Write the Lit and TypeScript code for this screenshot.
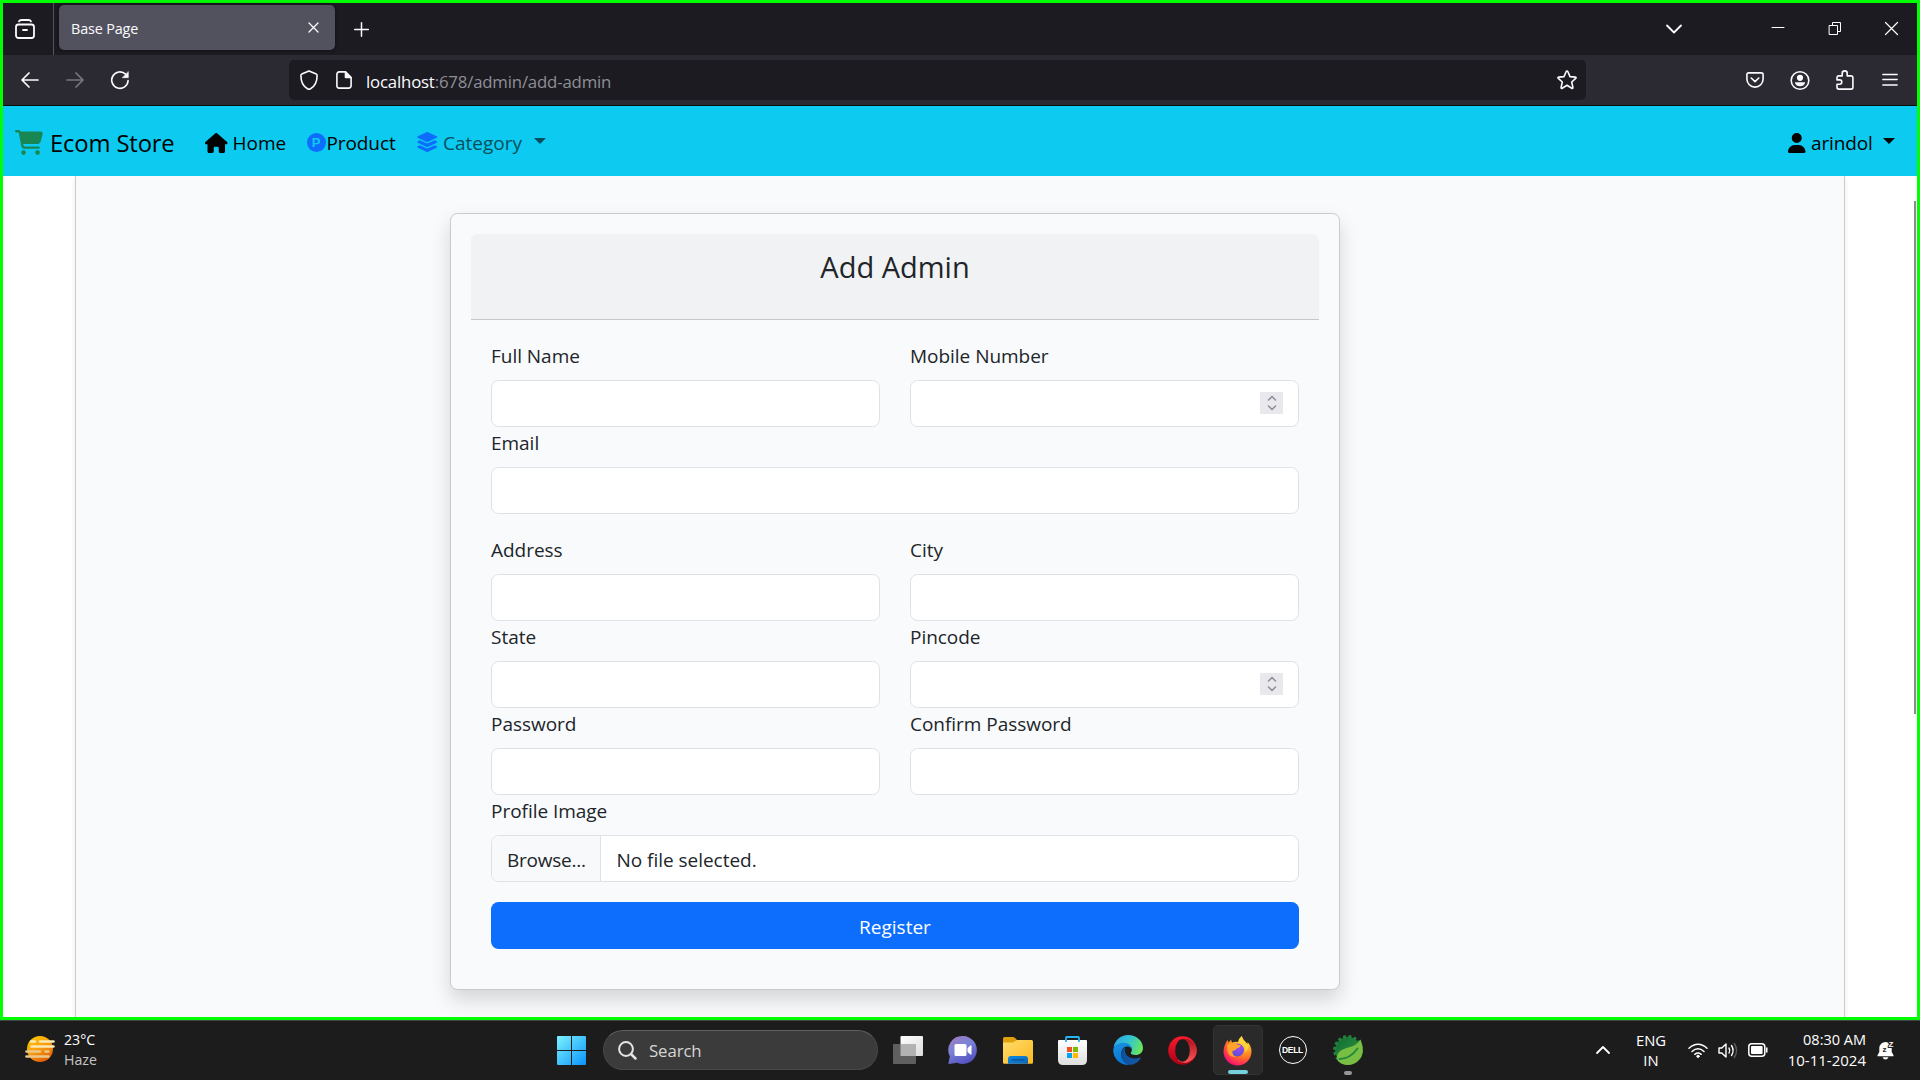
import { LitElement, html, svg, css, nothing } from "lit";
import { customElement, property } from "lit/decorators.js";

/* ---------- glyphs ---------- */

const line = (w: number, h: number, body: unknown, sw = 1.6, color = "#fbfbfe") => html`
  <svg width=${w} height=${h} viewBox="0 0 ${w} ${h}" fill="none" stroke=${color}
    stroke-width=${sw} stroke-linecap="round" stroke-linejoin="round">${body}</svg>`;

const solid = (w: number, h: number, vb: string, color: string, d: string) => html`
  <svg width=${w} height=${h} viewBox=${vb}><path fill=${color} d=${d}></path></svg>`;

const CART = "M0 24C0 10.7 10.7 0 24 0H69.5c22 0 41.5 12.8 50.6 32h411c26.3 0 45.5 25 38.6 50.4l-41 152.3c-8.5 31.4-37 53.3-69.5 53.3H170.7l5.4 28.5c2.2 11.3 12.1 19.5 23.6 19.5H488c13.3 0 24 10.7 24 24s-10.7 24-24 24H199.7c-34.6 0-64.3-24.6-70.7-58.5L77.4 54.5c-.7-3.8-4-6.5-7.9-6.5H24C10.7 48 0 37.3 0 24zM128 464a48 48 0 1 1 96 0 48 48 0 1 1 -96 0zm336-48a48 48 0 1 1 0 96 48 48 0 1 1 0-96z";
const HOUSE = "M575.8 255.5c0 18-15 32.1-32 32.1h-32l.7 160.2c0 2.7-.2 5.4-.5 8.1V472c0 22.1-17.9 40-40 40H456c-1.1 0-2.2 0-3.3-.1c-1.4 .1-2.8 .1-4.2 .1H416 392c-22.1 0-40-17.9-40-40V448 384c0-17.7-14.3-32-32-32H256c-17.7 0-32 14.3-32 32v64 24c0 22.1-17.9 40-40 40H160 128.1c-1.5 0-3-.1-4.5-.2c-1.2 .1-2.4 .2-3.6 .2H104c-22.1 0-40-17.9-40-40V360c0-.9 0-1.9 .1-2.8V287.6H32c-18 0-32-14-32-32.1c0-9 3-17 10-24L266.4 8c7-7 15-8 22-8s15 2 21 7L564.8 231.5c8 7 12 15 11 24z";
const LAYERS = "M264.5 5.2c14.9-6.9 32.1-6.9 47 0l218.6 101c8.5 3.9 13.9 12.4 13.9 21.8s-5.4 17.9-13.9 21.8l-218.6 101c-14.9 6.9-32.1 6.9-47 0L45.9 149.8C37.4 145.8 32 137.3 32 128s5.4-17.9 13.9-21.8L264.5 5.2zM476.9 209.6l53.2 24.6c8.5 3.9 13.9 12.4 13.9 21.8s-5.4 17.9-13.9 21.8l-218.6 101c-14.9 6.9-32.1 6.9-47 0L45.9 277.8C37.4 273.8 32 265.3 32 256s5.4-17.9 13.9-21.8l53.2-24.6 152 70.2c23.4 10.8 50.4 10.8 73.8 0l152-70.2zm-152 198.2l152-70.2 53.2 24.6c8.5 3.9 13.9 12.4 13.9 21.8s-5.4 17.9-13.9 21.8l-218.6 101c-14.9 6.9-32.1 6.9-47 0L45.9 405.8C37.4 401.8 32 393.3 32 384s5.4-17.9 13.9-21.8l53.2-24.6 152 70.2c23.4 10.8 50.4 10.8 73.8 0z";
const USER = "M224 256A128 128 0 1 0 224 0a128 128 0 1 0 0 256zm-45.7 48C79.8 304 0 383.8 0 482.3C0 498.7 13.3 512 29.7 512H418.3c16.4 0 29.7-13.3 29.7-29.7C448 383.8 368.2 304 269.7 304H178.3z";

const base = css`
  * { box-sizing: border-box; }
  svg { display: block; flex: none; overflow: visible; }
`;

/* ---------- browser window chrome ---------- */

@customElement("browser-chrome")
class BrowserChrome extends LitElement {
  static styles = [base, css`
    :host { display: block; flex: none; font-family: "Open Sans", sans-serif; color: #fbfbfe; }
    .tabs { display: flex; height: 52px; background: #1c1b22; }
    .cell { display: flex; align-items: center; justify-content: center; width: 45px; flex: none; }
    .side { width: 51px; border-right: 1px solid #55545c; padding-right: 6px; }
    .tab { display: flex; align-items: center; justify-content: space-between; width: 276px; height: 45px;
      margin: 2px 4px 0 5px; padding: 0 16px 0 12px; border-radius: 5px; background: #52525e;
      box-shadow: 0 0 4px rgba(0, 0, 0, .5); font-size: 14.4px; letter-spacing: -.15px; }
    .close-tab { padding-top: 0; }
    .label { padding-top: 2px; }
    .plus { padding-top: 1px; }
    .chev { margin-left: auto; margin-right: 53px; }
    .win { width: 57px; padding-bottom: 2px; }
    .win.edge { margin-right: -3px; }
    .bar { display: flex; height: 51px; background: #2b2a33; border-bottom: 1px solid #0c0c0d; padding: 0 5px 0 4.5px; }
    .url { display: flex; align-items: center; width: 1297px; height: 40px; margin: 5px auto 0 146.5px;
      padding: 0 9px 0 11px; border-radius: 5px; background: #1c1b22; font-size: 16.8px; letter-spacing: -.18px; }
    .doc { margin-left: 18px; margin-right: 14px; }
    .addr { padding-top: 3px; color: #8f8f97; white-space: nowrap; }
    .host { color: #fbfbfe; }
    .star { margin-left: auto; }
  `];

  render() {
    return html`
      <div class="tabs">
        <div class="cell side">${line(20, 20, svg`<rect x="1" y="5.5" width="18" height="13.5" rx="2.5"></rect><path d="M4 2.4Q4.6 1 6.5 1h7q1.9 0 2.5 1.4M8 11h4"></path>`, 1.8)}</div>
        <div class="tab"><span class="label">Base Page</span><span class="close-tab">${line(11, 11, svg`<path d="M1 1l9 9M10 1l-9 9"></path>`, 1.3)}</span></div>
        <div class="cell plus">${line(15, 15, svg`<path d="M7.5 .7v13.6M.7 7.5h13.6"></path>`, 1.5)}</div>
        <div class="cell chev">${line(16, 9, svg`<path d="M1 .5l7 7 7-7"></path>`, 1.8)}</div>
        <div class="cell win">${line(12, 1, svg`<path d="M0 -.5h12"></path>`, 1, "#fff")}</div>
        <div class="cell win">${line(12, 13, svg`<path d="M.5 3.5h8v9h-8zM3.5 3.5v-3h8v9h-3" stroke-linejoin="miter"></path>`, 1, "#fff")}</div>
        <div class="cell win edge">${line(13, 13, svg`<path d="M.5 .5l12 12M12.5 .5l-12 12"></path>`, 1.2, "#fff")}</div>
      </div>
      <div class="bar">
        <div class="cell">${line(18, 16, svg`<path d="M17 8H1.2M8 1L1 8l7 7"></path>`, 1.7)}</div>
        <div class="cell">${line(18, 16, svg`<path d="M1 8h15.8M10 1l7 7-7 7"></path>`, 1.7, "#78777f")}</div>
        <div class="cell">${line(18, 18, svg`<path d="M17.1 9.5A8.2 8.2 0 1 1 14.6 3.2"></path><path d="M17.3 .9v5.8h-5.8z" fill="#fbfbfe" stroke-width=".6"></path>`, 1.6)}</div>
        <div class="url">
          ${line(18, 20, svg`<path d="M9 .9l7.3 3.2q.8.4.8 1.3c0 5.600-1.700 10.500-6.600 13.300q-1.500.8-3 0C2.600 15.900.9 11 .9 5.400q0-.9.8-1.300z"></path>`, 1.6)}
          <span class="doc">${line(16, 18, svg`<path d="M3.200.9h6.300l5.600 5.600v8.300a2.300 2.300 0 0 1-2.300 2.300H3.200A2.300 2.300 0 0 1 .9 14.800V3.200A2.300 2.300 0 0 1 3.200.9z"></path><path d="M9.500 1v5.500H15z" fill="#fbfbfe"></path>`, 1.6)}</span>
          <span class="addr"><span class="host">localhost</span>:678/admin/add-admin</span>
          <span class="star">${line(20, 20, svg`<path d="M10 1q.6 0 .9.700l2.100 4.900 5.300.500q1.400.3.400 1.300l-4 3.600 1.200 5.400q.1 1.300-1.100.8L10 15.300l-4.800 2.900q-1.200.5-1.100-.8l1.200-5.400-4-3.600q-1-1 .4-1.300l5.300-.5 2.100-4.900q.3-.7.9-.7z"></path>`, 1.6)}</span>
        </div>
        <div class="cell">${line(18, 16, svg`<path d="M2.600.9h12.800a1.700 1.700 0 0 1 1.700 1.700v4.400a8.100 8.100 0 0 1-16.200 0V2.600A1.700 1.700 0 0 1 2.600.9zM5.200 6L9 9.600 12.800 6"></path>`, 1.6)}</div>
        <div class="cell">${line(20, 20, svg`<circle cx="10" cy="10.500" r="8.800"></circle><circle cx="10" cy="7.800" r="3.100" fill="#fbfbfe" stroke="none"></circle><path d="M4.800 12.300h10.400q-.8 3.900-5.200 3.900t-5.200-3.900z" fill="#fbfbfe" stroke="none"></path>`, 1.6)}</div>
        <div class="cell">${line(18, 20, svg`<path d="M2.600 5.900h3.600V3.400a2.500 2.500 0 0 1 5 0v2.500h3.900a1.800 1.800 0 0 1 1.800 1.800v9.600a1.800 1.800 0 0 1-1.800 1.800H2.800A1.800 1.800 0 0 1 1 17.300v-3h2.600a2.200 2.200 0 0 0 0-4.400H1V7.600a1.700 1.700 0 0 1 1.600-1.700z"></path>`, 1.6)}</div>
        <div class="cell">${line(16, 14, svg`<path d="M.8 1.500h14.400M.8 6.500h14.400M.8 12h14.400"></path>`, 1.3)}</div>
      </div>`;
  }
}

/* ---------- store navigation ---------- */

@customElement("store-nav")
class StoreNav extends LitElement {
  static styles = [base, css`
    :host { display: flex; flex: none; height: 70px; padding: 0 22px 0 12px; align-items: center; background: #0dcaf0;
      font-family: "Open Sans", sans-serif; font-size: 19px; color: #000; white-space: nowrap; }
    .item { display: flex; align-items: center; }
    .brand { width: 189.5px; font-size: 23.8px; gap: 7px; letter-spacing: -.15px; }
    .brand .t { padding-top: 3px; }
    .brand svg { margin-top: 3px; }
    .home { width: 102px; gap: 5.5px; }
    .home svg { margin-top: 3px; }
    .user svg { margin-top: 3px; }
    .product { width: 109px; }
    .product .t { letter-spacing: -.1px; }
    .category { color: #054f5d; }
    .category svg { margin-top: 2px; margin-right: 5px; }
    .t { padding-top: 3px; }
    .catname { width: 90.5px; }
    .p { display: flex; align-items: center; justify-content: center; width: 19px; height: 19px; margin: 2px 1px 0 0; border-radius: 50%;
      background: #0d6efd; color: #0dcaf0; font: bold 13px/19px "Liberation Sans", sans-serif; }
    .caret { border: 6px solid transparent; border-top-color: currentColor; border-bottom: 0; }
    .user { margin-left: auto; letter-spacing: -.15px; }
    .user .t { width: 72px; margin-left: 6px; }
  `];

  render() {
    return html`
      <div class="item brand">${solid(28, 25, "0 0 576 512", "#198754", CART)}<span class="t">Ecom Store</span></div>
      <div class="item home">${solid(22.5, 20, "0 0 576 512", "#000", HOUSE)}<span class="t">Home</span></div>
      <div class="item product"><span class="p">P</span><span class="t">Product</span></div>
      <div class="item category">${solid(22.5, 20, "0 0 576 512", "#0d6efd", LAYERS)}<span class="t catname">Category</span><span class="caret"></span></div>
      <div class="item user">${solid(17.5, 20, "0 0 448 512", "#000", USER)}<span class="t">arindol</span><span class="caret"></span></div>`;
  }
}

/* ---------- form ---------- */

@customElement("form-field")
class FormField extends LitElement {
  @property() label = "";
  @property() kind = "text";

  static styles = [base, css`
    :host { display: block; font-family: "Open Sans", sans-serif; font-size: 19px; letter-spacing: -.03px; color: #212529; }
    .label { display: block; height: 30px; line-height: 30px; padding-top: 1px; margin-bottom: 10px; }
    .control { display: flex; align-items: center; height: 47px; border: 1px solid #dee2e6; border-radius: 7.5px;
      background: #fff; overflow: hidden; }
    .input { flex: 1; min-width: 0; height: 100%; border: 0; outline: 0; background: none; padding: 0 15px; font: inherit; color: inherit; }
    .spin { display: flex; align-items: center; justify-content: center; width: 23px; height: 22px; margin: 0 15px 1px 0; background: #e9e9ed; }
    .browse { width: 109px; height: 100%; padding-left: 15px; padding-top: 2px; line-height: 45px; background: #f8f9fa; border-right: 1px solid #dee2e6;
      letter-spacing: -.25px; }
    .file { padding: 2px 0 0 15.5px; }
  `];

  render() {
    return html`
      <label class="label">${this.label}</label>
      <div class="control">
        ${this.kind === "file"
          ? html`<span class="browse">Browse...</span><span class="file">No file selected.</span>`
          : html`<input class="input" type=${this.kind === "password" ? "password" : "text"}>`}
        ${this.kind === "number"
          ? html`<span class="spin">${line(10, 16, svg`<path d="M1.500 5L5 1.500 8.500 5M1.500 11L5 14.500 8.500 11"></path>`, 1.6, "#8f8f9d")}</span>`
          : nothing}
      </div>`;
  }
}

@customElement("admin-page")
class AdminPage extends LitElement {
  static styles = [base, css`
    :host { display: flex; flex: 1; min-height: 0; overflow: hidden; background: #fff; font-family: "Open Sans", sans-serif; color: #212529; }
    .panel { width: 1770px; height: 900px; margin-left: 72px; padding: 37px 0 0 374px; flex: none;
      border: 1px solid #c8cacd; border-width: 0 1px; background: #f8fafc; box-shadow: 0 2px 5px rgba(0, 0, 0, .075); }
    .card { width: 890px; height: 777px; padding: 20px; border: 1px solid #c8cbce; border-radius: 7.5px; background: #f8fafc;
      box-shadow: 0 10px 20px rgba(0, 0, 0, .15); }
    .head { height: 86px; padding-top: 12px; border-bottom: 1px solid #c6c8ca; border-radius: 6px 6px 0 0; background: #f0f2f4;
      text-align: center; font-size: 29px; line-height: 42px; }
    .body { display: grid; grid-template-columns: 389px 389px; column-gap: 30px; padding: 20px; }
    .wide { grid-column: 1 / 3; }
    .gap { margin-bottom: 20px; }
    .btn { grid-column: 1 / 3; height: 47px; border: 0; border-radius: 7.5px; padding: 3px 0 0; background: #0d6efd; color: #fff; font: inherit; font-size: 19px; }
    .thumb { width: 2px; height: 513px; margin: 25px 1px 0 auto; background: #8a8a8d; }
  `];

  render() {
    return html`
      <div class="panel">
        <div class="card">
          <div class="head">Add Admin</div>
          <div class="body">
            <form-field label="Full Name"></form-field>
            <form-field label="Mobile Number" kind="number"></form-field>
            <form-field class="wide gap" label="Email"></form-field>
            <form-field label="Address"></form-field>
            <form-field label="City"></form-field>
            <form-field label="State"></form-field>
            <form-field label="Pincode" kind="number"></form-field>
            <form-field label="Password" kind="password"></form-field>
            <form-field label="Confirm Password" kind="password"></form-field>
            <form-field class="wide gap" label="Profile Image" kind="file"></form-field>
            <button class="btn">Register</button>
          </div>
        </div>
      </div>
      <div class="thumb"></div>`;
  }
}

/* ---------- taskbar ---------- */

const art = (w: number, h: number, body: unknown) => html`<svg width=${w} height=${h} viewBox="0 0 ${w} ${h}">${body}</svg>`;

const haze = art(30, 26, svg`
  <defs><linearGradient id="hz" x1="0.200" y1="0" x2="0.800" y2="1"><stop offset="0" stop-color="#ffc803"></stop><stop offset=".5" stop-color="#f79a0c"></stop><stop offset="1" stop-color="#dd5207"></stop></linearGradient></defs>
  <circle cx="15" cy="13" r="13" fill="url(#hz)"></circle>
  <g stroke-width="2.600" stroke-linecap="round"><path d="M6 5.500h4M15 5.500h13.500M6.500 10.500h22" stroke="#fbe9b4"></path><path d="M1.500 15.500h13.500M20.500 15.500h3M1.500 20.500h22" stroke="#e9c88a"></path></g>`);

const windows = art(29, 29, svg`
  <defs><linearGradient id="wn" gradientUnits="userSpaceOnUse" x1="0" y1="0" x2="29" y2="29"><stop offset="0" stop-color="#7cf3ff"></stop><stop offset="1" stop-color="#0a93fb"></stop></linearGradient></defs>
  <path fill="url(#wn)" d="M1 0h13v14H0V1q0-1 1-1zM15 0h13q1 0 1 1v13H15zM0 15h14v14H1q-1 0-1-1zM15 15h14v13q0 1-1 1H15z"></path>`);

const search = html`<svg width="19" height="19" viewBox="0 0 19 19" fill="none" stroke="#e4e4e4"><circle cx="8" cy="8" r="6.900" stroke-width="2"></circle><path d="M13 13l4.500 4.500" stroke-width="2.500" stroke-linecap="round"></path></svg>`;

const taskView = art(30, 28, svg`
  <defs><linearGradient id="tv" x1="0" y1="0" x2="1" y2="1"><stop offset="0" stop-color="#fff"></stop><stop offset="1" stop-color="#dcdcdc"></stop></linearGradient></defs>
  <rect x="7.500" width="22.500" height="20" rx="1" fill="url(#tv)"></rect><rect y="8" width="23" height="20" rx="1" fill="#5f5f5f"></rect><path d="M7.500 8H23v12H7.500z" fill="#b2b2b2"></path>`);

const chat = art(29, 28, svg`
  <defs><linearGradient id="ch" x1=".1" y1="0" x2=".6" y2="1"><stop offset="0" stop-color="#a07bbd"></stop><stop offset=".45" stop-color="#7b83d8"></stop><stop offset="1" stop-color="#5351c0"></stop></linearGradient></defs>
  <path fill="url(#ch)" d="M15 0a14 14 0 1 1-6 26.700L1.200 28q-1 0-.8-1l1.500-6.500A14 14 0 0 1 15 0z"></path>
  <rect x="6.500" y="8" width="12" height="12" rx="1.500" fill="#fff"></rect><path d="M19.500 12l3-2.500q1-.5 1 .5v8q0 1-1 .5l-3-2.500z" fill="#fff"></path>`);

const folder = art(30, 27, svg`
  <defs><linearGradient id="fd" x1="0" y1="0" x2="1" y2="1"><stop offset="0" stop-color="#ffdc6e"></stop><stop offset="1" stop-color="#fcb91e"></stop></linearGradient>
  <linearGradient id="fb" x1="0" y1="0" x2="1" y2="1"><stop offset="0" stop-color="#0a8ce4"></stop><stop offset="1" stop-color="#0f62b4"></stop></linearGradient></defs>
  <path fill="#dfa00a" d="M1.500 0h8.500q1 0 1.800.8L14 3H29v6H0V1.500Q0 0 1.500 0z"></path>
  <path fill="url(#fd)" d="M0 5.500h10L14 3h14.500Q30 3 30 4.500V25.500q0 1.300-1.300 1.300H1.300Q0 26.800 0 25.500z"></path>
  <path fill="url(#fb)" d="M5 26.800V22q0-3 3-3h14q3 0 3 3v4.800z"></path><path stroke="#0a4f94" stroke-width="1.200" d="M8.500 22.800h13"></path>`);

const store = art(29, 29, svg`
  <defs><linearGradient id="st" x1="0" y1="0" x2="0" y2="1"><stop offset="0" stop-color="#fff"></stop><stop offset="1" stop-color="#dedede"></stop></linearGradient></defs>
  <path fill="none" stroke="#25b5f1" stroke-width="1.800" d="M8 6V1.800Q8 1 8.800 1h11.400q.8 0 .8.800V6"></path>
  <path fill="url(#st)" d="M1 4h27q1 0 1 1v19q0 5-5 5H5q-5 0-5-5V5q0-1 1-1z"></path>
  <path fill="none" stroke="#25b5f1" stroke-width="1.800" d="M8 4v2M21 4v2"></path>
  <path fill="#f25022" d="M9 11h5v5H9z"></path><path fill="#7fba00" d="M15 11h5v5h-5z"></path><path fill="#00a4ef" d="M9 17h5v5H9z"></path><path fill="#ffb900" d="M15 17h5v5h-5z"></path>`);

const edge = art(30, 30, svg`
  <defs>
    <linearGradient id="e1" x1="0" y1=".3" x2="1" y2=".6"><stop offset="0" stop-color="#2ea7e6"></stop><stop offset=".5" stop-color="#33c6cf"></stop><stop offset="1" stop-color="#6be658"></stop></linearGradient>
    <linearGradient id="e2" x1="0" y1="0" x2=".4" y2="1"><stop offset="0" stop-color="#1a95e0"></stop><stop offset="1" stop-color="#0873d3"></stop></linearGradient>
    <linearGradient id="e3" x1="0" y1="0" x2="1" y2="1"><stop offset="0" stop-color="#0c4f9a"></stop><stop offset="1" stop-color="#1559a8"></stop></linearGradient>
  </defs>
  <path fill="url(#e1)" d="M.6 12.500C1.800 5.200 7.700 0 15 0c8.500 0 15 6 15 13 0 4.500-3.500 7-7.300 7-3 0-5-1-5-2 0-.7 1.200-1.300 1.200-3.300C18.900 11 15 8.600 11 8.600c-4.500 0-8 1.200-10.400 3.900z"></path>
  <path fill="url(#e2)" d="M.2 14.500C1.500 10 6 7.800 10.500 7.800c5 0 8.400 3 8.400 6.700-1-2-2.500-3-4.700-3-3.500 0-6 3.500-6 7.500 0 5 3.500 9.800 8.800 11C8 31 0 24 .2 14.500z"></path>
  <path fill="url(#e3)" d="M12.700 12.200C10 13.500 8.200 16 8.200 19c0 5.500 4 11 9.500 10.800 4-.4 8-3 10-6.600.2-.5-.2-.9-.8-.6-1.400.7-3 1-4.600 1-6 0-10-3.500-10.300-7.500-.1-1.500.1-2.800.7-3.900z"></path>`);

const opera = art(29, 29, svg`
  <defs><linearGradient id="op" x1="0" y1="0" x2="0" y2="1"><stop offset="0" stop-color="#ff1b2d"></stop><stop offset="1" stop-color="#a70014"></stop></linearGradient>
  <linearGradient id="oq" x1="0" y1="0" x2="0" y2="1"><stop offset="0" stop-color="#a8101c"></stop><stop offset="1" stop-color="#ff5a5a"></stop></linearGradient></defs>
  <circle cx="14.500" cy="14.500" r="14.300" fill="url(#op)"></circle>
  <path fill="url(#oq)" d="M10 4.500q4-2.500 9-1.500c6 2 9.800 6.500 9.800 11.500s-3.800 10-9.800 12q-5 1-9-2z"></path>
  <ellipse cx="14.500" cy="14.500" rx="7.300" ry="11.200" fill="#1c1c1c"></ellipse>`);

const firefox = art(29, 29, svg`
  <defs><radialGradient id="ff" cx=".75" cy=".1" r="1"><stop offset="0" stop-color="#fff44f"></stop><stop offset=".3" stop-color="#ffbd2e"></stop><stop offset=".6" stop-color="#ff7a22"></stop><stop offset=".82" stop-color="#ff3750"></stop><stop offset="1" stop-color="#eb0878"></stop></radialGradient>
  <radialGradient id="fp" cx=".6" cy=".3" r=".8"><stop offset="0" stop-color="#a247f5"></stop><stop offset="1" stop-color="#4f52cf"></stop></radialGradient></defs>
  <path fill="url(#ff)" d="M2.500 7.500L4.300 4l1.500 2.400L8 3.500l1 3q3-1.300 6-.5.500-3.500 3.700-6 .5 3.500 3.800 6 .8 1 1.500 2.500.8-1 .5-2.500 4 4 4 9.500a14 14 0 0 1-28 0q0-4.500 2-8z"></path>
  <circle cx="14.500" cy="14" r="6.500" fill="url(#fp)"></circle>
  <path fill="#ffa32b" d="M4 9q5-3.500 10.500-.5 2.500.2 3.500 1.300-1.300 2.400-4 2.400-1 2.300-4.500 2.800-.8 4 3.500 6Q6 21 4.500 15.500z"></path>
  <path fill="#ffd23a" d="M18.700 0q-2 4 1.300 7 3.500 4 1.500 9.500 6-4.500 2.500-9Q20 4.500 18.700 0z"></path>`);

const spring = art(30, 30, svg`
  <defs><linearGradient id="sp" x1="0" y1="0" x2="1" y2="1"><stop offset="0" stop-color="#116b35"></stop><stop offset="1" stop-color="#2f9a3e"></stop></linearGradient></defs>
  <circle cx="15" cy="15" r="13" fill="url(#sp)"></circle>
  <circle cx="15" cy="15" r="13.400" fill="none" stroke="#23823b" stroke-width="3" stroke-dasharray="3 2.260"></circle>
  <path fill="#78be43" d="M27.500 4.500C31 13 31 21 25 26c-5 5-15 5.500-20 0-2-4-1-8 3-10.500C14 11.500 22 13 27.500 4.500z"></path>
  <path fill="none" stroke="#1d8a3c" stroke-width="1.800" stroke-linecap="round" d="M6.500 24Q17 24 24.500 13.500"></path>`);

@customElement("task-bar")
class TaskBar extends LitElement {
  static styles = [base, css`
    :host { display: flex; flex: none; height: 60px; padding-bottom: 1px; align-items: center; border-top: 1px solid #434345; background: #1c1c1c;
      font-family: "Open Sans", sans-serif; font-size: 14.200px; line-height: 20px; color: #fff; white-space: nowrap; }
    .weather { display: flex; align-items: center; width: 544px; padding-left: 25px; gap: 9px; }
    .weather svg { margin-top: -3px; }
    .dim { color: #c4c4c4; }
    .app { position: relative; display: flex; align-items: center; justify-content: center; width: 55px; height: 50px; flex: none; }
    .active { width: 50px; margin: 0 2.500px; border-radius: 5px; background: #2a2a2a; border: 1px solid #333; }
    .active::after, .open::after { content: ""; position: absolute; bottom: 0; width: 20px; height: 4px; border-radius: 2px; background: #74d0da; }
    .open::after { width: 8px; background: #969696; }
    .search { display: flex; align-items: center; width: 275px; height: 40px; padding-left: 14px; margin: 0 2.500px 0 3.500px; gap: 12.500px;
      border-radius: 20px; border: 1px solid #484848; border-top-color: #606060; background: #3b3b3b; color: #d6d6d6; font-size: 16.800px; letter-spacing: -.1px; }
    .query { padding-top: 2px; }
    .dell { display: flex; align-items: center; justify-content: center; width: 28px; height: 28px; border: 1.500px solid #fff; border-radius: 50%;
      font: bold 8.500px/1 "Liberation Sans", sans-serif; letter-spacing: -.3px; }
    .tray { display: flex; align-items: center; margin-left: auto; padding-right: 23px; }
    .lang { width: 60px; margin: 0 7px 0 11.500px; text-align: center; font-size: 14.800px; }
    .icons { display: flex; align-items: center; gap: 10px; margin-right: 20px; }
    .clock { width: 78px; display: flex; flex-direction: column; align-items: flex-end; margin-right: 11px; }
    .date { font-size: 15px; }
    .time { font-size: 14.500px; }
    .z { font: bold 8px "Liberation Sans", sans-serif; }
  `];

  render() {
    return html`
      <div class="weather">${haze}<div>23°C<br><span class="dim">Haze</span></div></div>
      <div class="app">${windows}</div>
      <div class="search">${search}<span class="query">Search</span></div>
      <div class="app">${taskView}</div>
      <div class="app">${chat}</div>
      <div class="app">${folder}</div>
      <div class="app">${store}</div>
      <div class="app">${edge}</div>
      <div class="app">${opera}</div>
      <div class="app active">${firefox}</div>
      <div class="app"><span class="dell">DELL</span></div>
      <div class="app open">${spring}</div>
      <div class="tray">
        ${line(14, 8, svg`<path d="M1 7l6-6 6 6"></path>`, 1.8, "#fff")}
        <div class="lang">ENG<br>IN</div>
        <div class="icons">
          ${line(20, 15, svg`<path d="M1 5.200q9-8 18 0M4 8.500q6-5.400 12 0M6.800 11.300q3.200-2.600 6.400 0"></path><circle cx="10" cy="13.300" r="1.200" fill="#fff" stroke-width=".8"></circle>`, 1.5, "#fff")}
          ${line(20, 15, svg`<path d="M1 5h2.800L8 1v13l-4.200-4H1zM11 5q1.600 2.500 0 5M13.500 2.500q3.200 5 0 10"></path><path d="M16.300 .5q4.500 7 0 14" stroke="#5c5c5c"></path>`, 1.4, "#fff")}
          ${line(20, 14, svg`<rect x=".8" y=".8" width="16" height="12.400" rx="3"></rect><rect x="3" y="3" width="11.600" height="8" rx="1" fill="#fff" stroke="none"></rect><path d="M18.800 5v4"></path>`, 1.5, "#fff")}
        </div>
        <div class="clock"><span class="time">08:30 AM</span><span class="date">10-11-2024</span></div>
        <svg width="20" height="20" viewBox="0 0 20 20"><path fill="#fff" d="M8.500 2a6.200 6.200 0 0 1 6.200 6.200V12l1.800 3.300v.9H.500v-.9L2.300 12V8.200A6.200 6.200 0 0 1 8.500 2zM5.500 17.200h6q-1 2.300-3 2.300t-3-2.300z"></path><text class="z" x="5.500" y="12" fill="#1c1c1c">z</text><text class="z" x="11.500" y="6.500" fill="#fff" stroke="#1c1c1c" stroke-width="2" paint-order="stroke">Z</text></svg>
      </div>`;
  }
}

@customElement("app-root")
class AppRoot extends LitElement {
  static styles = [base, css`
    :host { display: flex; flex-direction: column; width: 1920px; height: 1080px; overflow: hidden; }
    .window { display: flex; flex-direction: column; width: 1920px; height: 1020px; border: 3px solid #00ff00; }
  `];

  render() {
    return html`
      <div class="window">
        <browser-chrome></browser-chrome>
        <store-nav></store-nav>
        <admin-page></admin-page>
      </div>
      <task-bar></task-bar>`;
  }
}
